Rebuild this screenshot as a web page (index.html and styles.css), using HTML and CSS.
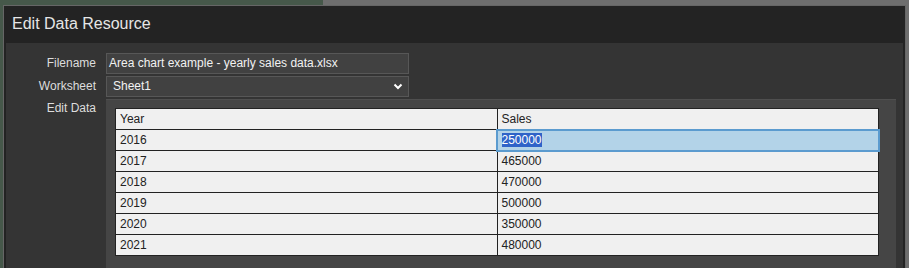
FILE: index.html
```html
<!DOCTYPE html>
<html lang="en">
<head>
    <meta charset="UTF-8">
    <title>Edit Data Resource</title>
    <link rel="stylesheet" href="styles.css">
</head>
<body>
    <div class="dialog">
        <div class="dialog-header">Edit Data Resource</div>
        <div class="dialog-body">
            <div class="form-row">
                <label class="form-label">Filename</label>
                <div class="field">Area chart example - yearly sales data.xlsx</div>
            </div>
            <div class="form-row">
                <label class="form-label">Worksheet</label>
                <div class="field select">
                    <span>Sheet1</span>
                    <svg class="chevron" width="10" height="7" viewBox="0 0 10 7">
                        <path d="M1.5 1.5 L5 5 L8.5 1.5" fill="none" stroke="#fff" stroke-width="2"/>
                    </svg>
                </div>
            </div>
            <div class="form-row">
                <label class="form-label top">Edit Data</label>
                <div class="data-panel">
                    <table class="grid">
                        <tr><td>Year</td><td>Sales</td></tr>
                        <tr><td>2016</td><td class="selected"><span class="sel-text">250000</span></td></tr>
                        <tr><td>2017</td><td>465000</td></tr>
                        <tr><td>2018</td><td>470000</td></tr>
                        <tr><td>2019</td><td>500000</td></tr>
                        <tr><td>2020</td><td>350000</td></tr>
                        <tr><td>2021</td><td>480000</td></tr>
                    </table>
                </div>
            </div>
        </div>
    </div>
</body>
</html>
```

FILE: styles.css
```css
html {
    overflow: hidden;
}
body {
    margin: 0;
    height: 268px;
    overflow: hidden;
    font-family: "Liberation Sans", Arial, sans-serif;
    background: linear-gradient(to right, #46584a 0, #46584a 323px, #6e6e6e 323px);
}
.dialog {
    margin: 5px 3px 0 3px;
    border: 1px solid #666;
    border-bottom: none;
    background: #232323;
    height: 262px;
}
.dialog-header {
    height: 37px;
    line-height: 36px;
    padding-left: 8px;
    font-size: 16px;
    color: #e6e6e6;
}
.dialog-body {
    margin: 0 2px;
    background: #343434;
    padding-top: 10px;
    height: 215px;
}
.form-row {
    display: flex;
    margin-bottom: 2px;
}
.form-label {
    width: 90px;
    margin-right: 10px;
    text-align: right;
    font-size: 12px;
    color: #ddd;
    line-height: 21px;
}
.form-label.top {
    line-height: 16px;
    padding-top: 1px;
}
.field {
    box-sizing: border-box;
    width: 303px;
    height: 21px;
    line-height: 19px;
    padding-left: 2px;
    background: #414141;
    border: 1px solid #575757;
    color: #f2f2f2;
    font-size: 12px;
}
.select {
    display: flex;
    align-items: center;
    justify-content: space-between;
    padding: 0 5px 0 6px;
}
.chevron {
    display: block;
}
.data-panel {
    width: 781px;
    background: #454545;
    border-top: 1px solid #4f4f4f;
    padding: 8px 0 0 9px;
    height: 160px;
}
.grid {
    width: 764px;
    border-collapse: collapse;
    table-layout: fixed;
    background: #f0f0f0;
    border: 1px solid #222;
    font-size: 12px;
    color: #222;
}
.grid td {
    border: 1px solid #222;
    height: 20px;
    padding: 0 0 0 4px;
    line-height: 20px;
}
.grid td.selected {
    background: #b3d3e8;
    outline: 2px solid #5b9bcf;
    outline-offset: -1px;
}
.sel-text {
    background: #2f63c8;
    color: #fff;
}
```
